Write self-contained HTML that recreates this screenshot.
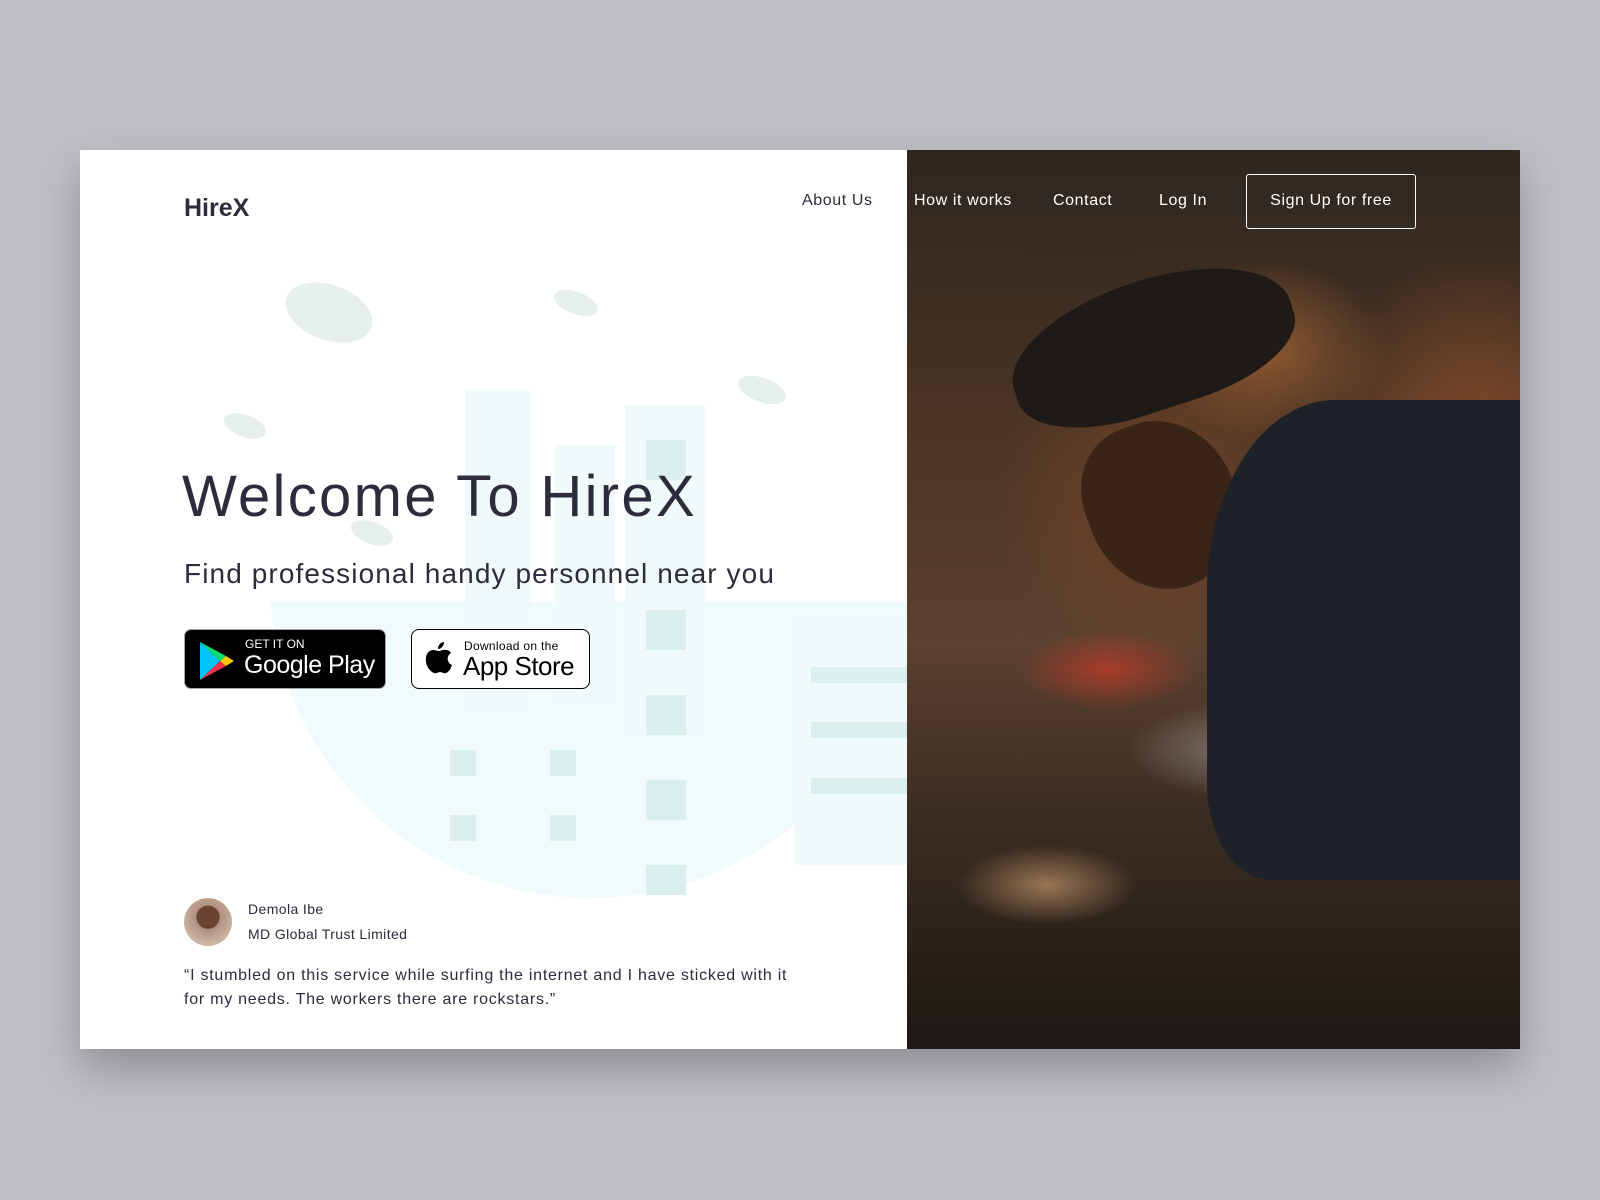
<!DOCTYPE html>
<html><head><meta charset="utf-8"><style>
*{margin:0;padding:0;box-sizing:border-box}
body{width:1600px;height:1200px;background:#c0bfc5;font-family:"Liberation Sans",sans-serif;position:relative;overflow:hidden}
.card{position:absolute;left:80px;top:150px;width:1440px;height:899px;background:#fff;box-shadow:0 20px 40px rgba(0,0,0,.25);overflow:hidden}
.photo{position:absolute;left:827px;top:0;width:613px;height:899px;background:
radial-gradient(ellipse 120px 90px at 360px 200px,rgba(200,120,60,.55),transparent),
radial-gradient(ellipse 160px 200px at 570px 300px,rgba(190,100,50,.5),transparent),
radial-gradient(ellipse 90px 40px at 200px 520px,rgba(220,60,40,.6),transparent),
radial-gradient(ellipse 130px 50px at 350px 600px,rgba(200,200,200,.5),transparent),
radial-gradient(ellipse 90px 40px at 140px 735px,rgba(220,170,120,.6),transparent),
radial-gradient(ellipse 160px 180px at 250px 350px,rgba(120,70,40,.8),transparent),
linear-gradient(180deg,#2e2620 0%,#4a3424 30%,#5a4030 55%,#3a2c22 75%,#1c1814 100%)}
.hat{position:absolute;left:100px;top:130px;width:290px;height:130px;background:#1e1a18;border-radius:50% 50% 40% 40%;transform:rotate(-18deg)}
.body{position:absolute;left:300px;top:250px;width:320px;height:480px;background:#1d2228;border-radius:40% 0 0 20%}
.face{position:absolute;left:180px;top:270px;width:150px;height:170px;background:#3a2418;border-radius:40% 50% 50% 50%;transform:rotate(-20deg)}
.t{position:absolute;color:#2d2c3c;white-space:nowrap}
.nav{position:absolute;top:42px;font-size:16px;white-space:nowrap;letter-spacing:.6px}
.bld{position:absolute;background:#f1fafa}
.win{position:absolute;background:#dcefef}
</style></head><body>
<div class="card">
<div style="position:absolute;left:190px;top:452px;width:640px;height:296px;overflow:hidden"><div style="position:absolute;left:0;top:-340px;width:640px;height:636px;background:#f2fbfb;border-radius:50%"></div></div>
<div class="bld" style="left:385px;top:240px;width:65px;height:320px"></div>
<div class="bld" style="left:475px;top:295px;width:60px;height:260px"></div>
<div class="bld" style="left:545px;top:255px;width:80px;height:330px"></div>
<div class="bld" style="left:715px;top:465px;width:120px;height:250px"></div>
<div class="win" style="left:566px;top:290px;width:40px;height:40px"></div>
<div class="win" style="left:566px;top:460px;width:40px;height:40px"></div>
<div class="win" style="left:566px;top:545px;width:40px;height:40px"></div>
<div class="win" style="left:566px;top:630px;width:40px;height:40px"></div>
<div class="win" style="left:566px;top:715px;width:40px;height:30px"></div>
<div class="win" style="left:370px;top:600px;width:26px;height:26px"></div>
<div class="win" style="left:370px;top:665px;width:26px;height:26px"></div>
<div class="win" style="left:470px;top:600px;width:26px;height:26px"></div>
<div class="win" style="left:470px;top:665px;width:26px;height:26px"></div>
<div class="win" style="left:731px;top:517px;width:96px;height:16px"></div>
<div class="win" style="left:731px;top:572px;width:96px;height:16px"></div>
<div class="win" style="left:731px;top:628px;width:96px;height:16px"></div>
<div style="position:absolute;left:204px;top:135px;width:90px;height:55px;background:#e6eeee;border-radius:50%;transform:rotate(20deg)"></div>
<div style="position:absolute;left:473px;top:142px;width:46px;height:22px;background:#e6eeee;border-radius:50%;transform:rotate(20deg)"></div>
<div style="position:absolute;left:657px;top:228px;width:50px;height:24px;background:#e6eeee;border-radius:50%;transform:rotate(20deg)"></div>
<div style="position:absolute;left:143px;top:265px;width:44px;height:22px;background:#e6eeee;border-radius:50%;transform:rotate(20deg)"></div>
<div style="position:absolute;left:270px;top:372px;width:44px;height:22px;background:#e6eeee;border-radius:50%;transform:rotate(20deg)"></div>

<div class="photo"><div class="face"></div><div class="body"></div><div class="hat"></div></div>

<div class="t" style="left:104px;top:44px;font-size:25px;font-weight:bold">HireX</div>
<div class="nav" style="left:722px;color:#2d2c3c">About Us</div>
<div class="nav" style="left:834px;color:#fff">How it works</div>
<div class="nav" style="left:973px;color:#fff">Contact</div>
<div class="nav" style="left:1079px;color:#fff">Log In</div>
<div style="position:absolute;left:1166px;top:24px;width:170px;height:55px;border:1.5px solid #fff;border-radius:3px;color:#fff;font-size:16px;text-align:center;line-height:52px;letter-spacing:.6px">Sign Up for free</div>

<div class="t" style="left:102px;top:313px;font-size:58px;letter-spacing:2.3px">Welcome To HireX</div>
<div class="t" style="left:104px;top:408px;font-size:28px;letter-spacing:1.1px">Find professional handy personnel near you</div>

<div style="position:absolute;left:104px;top:479px;width:202px;height:60px;background:#000;border:1px solid #a6a6a6;border-radius:7px">
<svg style="position:absolute;left:13px;top:10px" width="38" height="42" viewBox="0 0 38 42"><path d="M2 2 L22 21 L2 40Z" fill="#00c3ff"/><path d="M2 2 L28 16 L22 21Z" fill="#00e06a"/><path d="M2 40 L28 26 L22 21Z" fill="#f43249"/><path d="M28 16 L36 21 L28 26 L22 21Z" fill="#ffc800"/></svg>
<div style="position:absolute;left:60px;top:7px;color:#fff;font-size:12px">GET IT ON</div>
<div style="position:absolute;left:59px;top:21px;color:#fff;font-size:25px;letter-spacing:-.5px">Google Play</div></div>

<div style="position:absolute;left:331px;top:479px;width:179px;height:60px;background:#fff;border:1.5px solid #000;border-radius:8px">
<svg style="position:absolute;left:12px;top:10px" width="30" height="36" viewBox="0 0 30 36"><path d="M20 2c0 4-3 7-6 7 0-4 3-7 6-7zM15 11c2 0 4-2 7-1 2 0 4 1 5 3-5 3-4 10 1 12-1 3-3 7-6 8-2 1-4-1-6-1s-4 2-6 1C5 31 1 24 2 18c0-5 4-8 7-8 2 0 4 1 6 1z" fill="#000"/></svg>
<div style="position:absolute;left:52px;top:9px;font-size:12px;color:#000;letter-spacing:.3px">Download on the</div>
<div style="position:absolute;left:51px;top:21px;font-size:26px;color:#000;letter-spacing:-.5px">App Store</div></div>

<div style="position:absolute;left:104px;top:748px;width:48px;height:48px;border-radius:50%;background:radial-gradient(circle at 50% 40%,#6a4430 30%,#b09080 32%,#c9b3a2 70%)"></div>
<div class="t" style="left:168px;top:751px;font-size:14px;letter-spacing:.4px">Demola Ibe</div>
<div class="t" style="left:168px;top:776px;font-size:14px;letter-spacing:.4px">MD Global Trust Limited</div>
<div class="t" style="left:104px;top:814px;font-size:16px;line-height:24px;letter-spacing:.75px">“I stumbled on this service while surfing the internet and I have sticked with it<br>for my needs. The workers there are rockstars.”</div>
</div>
</body></html>
